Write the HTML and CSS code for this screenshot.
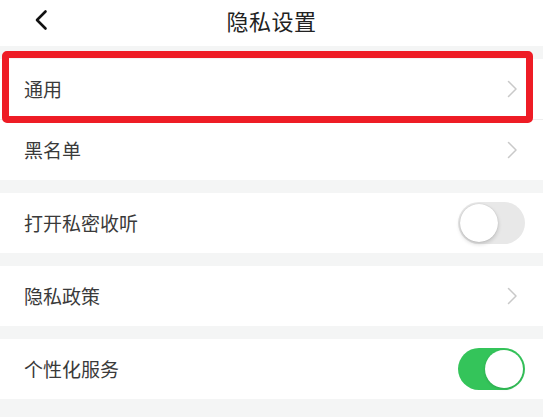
FILE: index.html
```html
<!DOCTYPE html>
<html lang="zh">
<head>
<meta charset="utf-8">
<link rel="stylesheet" href="styles.css">
</head>
<body>
<div class="page">
  <header class="header">
    <span class="back">
      <svg width="14" height="22" viewBox="0 0 14 22"><path d="M11.5 2.5 L3 11 L11.5 19.5" fill="none" stroke="#111" stroke-width="2.6" stroke-linecap="round" stroke-linejoin="round"/></svg>
    </span>
    <h1 class="title">隐私设置</h1>
  </header>

  <section class="group">
    <div class="row">
      <span class="label">通用</span>
      <svg class="chev" width="11" height="18" viewBox="0 0 11 18"><path d="M1.5 1.5 L9 9 L1.5 16.5" fill="none" stroke="#c9c9c9" stroke-width="1.5" stroke-linecap="round" stroke-linejoin="round"/></svg>
    </div>
    <div class="divider"></div>
    <div class="row">
      <span class="label">黑名单</span>
      <svg class="chev" width="11" height="18" viewBox="0 0 11 18"><path d="M1.5 1.5 L9 9 L1.5 16.5" fill="none" stroke="#c9c9c9" stroke-width="1.5" stroke-linecap="round" stroke-linejoin="round"/></svg>
    </div>
  </section>

  <section class="group">
    <div class="row">
      <span class="label">打开私密收听</span>
      <span class="switch"><span class="knob"></span></span>
    </div>
  </section>

  <section class="group">
    <div class="row">
      <span class="label">隐私政策</span>
      <svg class="chev" width="11" height="18" viewBox="0 0 11 18"><path d="M1.5 1.5 L9 9 L1.5 16.5" fill="none" stroke="#c9c9c9" stroke-width="1.5" stroke-linecap="round" stroke-linejoin="round"/></svg>
    </div>
  </section>

  <section class="group">
    <div class="row">
      <span class="label">个性化服务</span>
      <span class="switch on"><span class="knob"></span></span>
    </div>
  </section>

  <div class="highlight"></div>
</div>
</body>
</html>
```

FILE: styles.css
```css
* { box-sizing: border-box; }
html, body {
  margin: 0;
  padding: 0;
  background: #f4f5f5;
}
body {
  font-family: "Noto Sans CJK SC", "Noto Sans", sans-serif;
}
.page {
  position: relative;
  width: 543px;
  height: 417px;
  overflow: hidden;
  background: #f4f5f5;
}
.header {
  height: 46px;
  background: #fff;
  display: flex;
  align-items: center;
  justify-content: center;
  position: relative;
}
.back {
  position: absolute;
  left: 34px;
  top: 9px;
  display: flex;
}
.title {
  margin: 0;
  margin-top: -6px;
  font-size: 22px;
  font-weight: 400;
  color: #222;
  letter-spacing: 0.5px;
}
.group {
  margin-top: 13px;
  background: #fff;
}
.row {
  height: 60px;
  display: flex;
  align-items: center;
  justify-content: space-between;
  padding: 0 24px 0 24px;
}
.label {
  font-size: 19px;
  color: #3a3a3a;
  margin-top: -1px;
}
.chev {
  margin-right: 1px;
}
.divider {
  height: 1px;
  background: #eeeeee;
}
.switch {
  width: 67px;
  height: 42px;
  border-radius: 21px;
  background: #e8e8e8;
  position: relative;
  margin-right: -6px;
}
.switch .knob {
  position: absolute;
  top: 2px;
  left: 2px;
  width: 38px;
  height: 38px;
  border-radius: 50%;
  background: #fff;
  box-shadow: 0 2px 4px rgba(0,0,0,0.18), 0 0 1px rgba(0,0,0,0.2);
}
.switch.on {
  background: #34c45a;
}
.switch.on .knob {
  left: auto;
  right: 2px;
  box-shadow: 0 1px 3px rgba(0,0,0,0.15);
}
.highlight {
  position: absolute;
  left: 2px;
  top: 51px;
  width: 531px;
  height: 72px;
  border: 7px solid #ee1c25;
  border-radius: 5px;
}
```
